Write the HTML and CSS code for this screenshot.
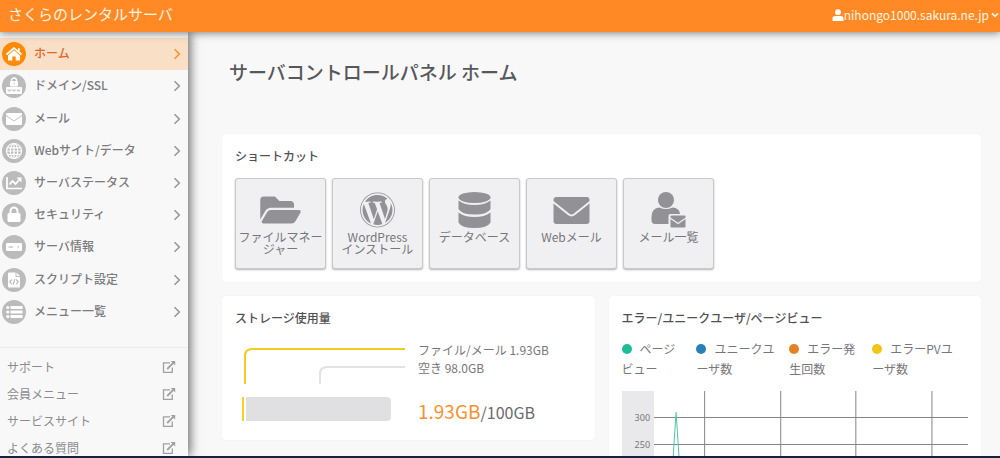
FILE: index.html
```html
<!DOCTYPE html>
<html lang="ja">
<head>
<meta charset="utf-8">
<meta name="viewport" content="width=device-width, initial-scale=1">
<title>サーバコントロールパネル ホーム</title>
<link rel="stylesheet" href="styles.css">
</head>
<body>
<svg class="defs" aria-hidden="true">
  <symbol id="chevron" viewBox="0 0 8 12"><path d="M1.5 1.2 6.3 6 1.5 10.8" fill="none" stroke="currentColor" stroke-width="1.6"/></symbol>
  <symbol id="external" viewBox="0 0 14 14"><path d="M8 2.8H1.5v9.5h8.8V7.5" fill="none" stroke="currentColor" stroke-width="1.3"/><path d="M5.2 9 11.5 2.6" stroke="currentColor" stroke-width="1.8"/><path d="M8.6 1H13.2V5.6Z" fill="currentColor"/></symbol>
</svg>
<div class="app">
  <header class="topbar">
    <a class="brand" href="#">さくらのレンタルサーバ</a>
    <button class="account" type="button">
      <svg class="account-icon" viewBox="0 0 12 12" aria-hidden="true"><circle cx="6" cy="3.2" r="2.9" fill="currentColor"/><path d="M.5 12V9.800Q.5 7 3.300 7H8.700Q11.500 7 11.500 9.800V12Z" fill="currentColor"/></svg>
      <span>nihongo1000.sakura.ne.jp</span>
      <svg class="account-caret" viewBox="0 0 8 6" aria-hidden="true"><path d="M1 1.300 4 4.300 7 1.300" fill="none" stroke="currentColor" stroke-width="1.700"/></svg>
    </button>
  </header>
  <div class="body">
    <aside class="sidebar">
      <nav class="menu" aria-label="メインメニュー">
        <a class="menu-item active" href="#"><svg class="badge" viewBox="0 0 24 24"><circle cx="12" cy="12" r="12"/><g fill="#fff"><path d="M12 8.300 18 13.500V18.500H13.700V14.500H10.300V18.500H6V13.500Z"/><path d="M4.500 12.500 12 6 19.500 12.500M16.800 6.200V9.500" fill="none" stroke="#fff" stroke-width="1.700"/></g></svg><span>ホーム</span><svg class="arrow"><use href="#chevron"/></svg></a>
        <a class="menu-item" href="#"><svg class="badge" viewBox="0 0 24 24"><circle cx="12" cy="12" r="12"/><path d="M9.500 8V6.500a2.500 2.500 0 0 1 5 0V8" fill="none" stroke="#fff" stroke-width="1.300"/><rect x="8" y="7" width="8" height="5.500" rx=".8" fill="#fff"/><rect x="4" y="13" width="16" height="7" rx="1" fill="#fff"/><path d="M12 8.500v2M6 15.300l.7 2 .8-1.600.8 1.600.7-2M10.500 15.300l.7 2 .8-1.600.8 1.600.7-2M15 15.300l.7 2 .8-1.600.8 1.600.7-2" fill="none" stroke="#bbb" stroke-width=".8"/></svg><span>ドメイン/SSL</span><svg class="arrow"><use href="#chevron"/></svg></a>
        <a class="menu-item" href="#"><svg class="badge" viewBox="0 0 24 24"><circle cx="12" cy="12" r="12"/><rect x="4" y="6" width="16" height="12" rx="1" fill="#fff"/><path d="M4 8.500 12 14l8-5.500" fill="none" stroke="#bbb" stroke-width=".9"/></svg><span>メール</span><svg class="arrow"><use href="#chevron"/></svg></a>
        <a class="menu-item" href="#"><svg class="badge" viewBox="0 0 24 24"><circle cx="12" cy="12" r="12"/><g fill="none" stroke="#fff" stroke-width="1.200"><circle cx="12" cy="12" r="7.500"/><ellipse cx="12" cy="12" rx="3.700" ry="7.500"/><path d="M12 4.500v15M5.300 8.800h13.400M4.500 12h15M5.300 15.300h13.400"/></g></svg><span>Webサイト/データ</span><svg class="arrow"><use href="#chevron"/></svg></a>
        <a class="menu-item" href="#"><svg class="badge" viewBox="0 0 24 24"><circle cx="12" cy="12" r="12"/><path d="M5 6v11.500h15" fill="none" stroke="#fff" stroke-width="1.700"/><path d="m7.500 13.500 3-3.500 3 3 4-4.500" fill="none" stroke="#fff" stroke-width="1.800"/><path d="M14.500 6.500H19.500V11.500Z" fill="#fff"/></svg><span>サーバステータス</span><svg class="arrow"><use href="#chevron"/></svg></a>
        <a class="menu-item" href="#"><svg class="badge" viewBox="0 0 24 24"><circle cx="12" cy="12" r="12"/><path d="M8.500 11V8a3.500 3.500 0 0 1 7 0v3" fill="none" stroke="#fff" stroke-width="2"/><rect x="5.500" y="10" width="13" height="9" rx="1.500" fill="#fff"/></svg><span>セキュリティ</span><svg class="arrow"><use href="#chevron"/></svg></a>
        <a class="menu-item" href="#"><svg class="badge" viewBox="0 0 24 24"><circle cx="12" cy="12" r="12"/><rect x="4" y="8" width="16" height="8" rx="1" fill="#fff"/><path d="M6.500 12h4.500M15.500 12h1.500" stroke="#ccc" stroke-width="1.500"/></svg><span>サーバ情報</span><svg class="arrow"><use href="#chevron"/></svg></a>
        <a class="menu-item" href="#"><svg class="badge" viewBox="0 0 24 24"><circle cx="12" cy="12" r="12"/><path d="M7 4.500h6.500v4.500H18v9.500a1 1 0 0 1-1 1H7a1 1 0 0 1-1-1v-13a1 1 0 0 1 1-1ZM14.500 4.500 18 8h-3.500Z" fill="#fff"/><path d="M9.800 11.500 7.800 13.800 9.800 16.100M14.200 11.500l2 2.300-2 2.300M12.800 11l-1.600 5.700" fill="none" stroke="#bbb" stroke-width="1.200"/></svg><span>スクリプト設定</span><svg class="arrow"><use href="#chevron"/></svg></a>
        <a class="menu-item" href="#"><svg class="badge" viewBox="0 0 24 24"><circle cx="12" cy="12" r="12"/><g fill="#fff"><circle cx="5.800" cy="7.500" r="1.600"/><circle cx="5.800" cy="12" r="1.600"/><circle cx="5.800" cy="16.500" r="1.600"/><path d="M8.500 6h12v3h-12zM8.500 10.500h12v3h-12zM8.500 15h12v3h-12z"/></g></svg><span>メニュー一覧</span><svg class="arrow"><use href="#chevron"/></svg></a>
      </nav>
      <nav class="links" aria-label="関連リンク">
        <a href="#"><span>サポート</span><svg class="ext"><use href="#external"/></svg></a>
        <a href="#"><span>会員メニュー</span><svg class="ext"><use href="#external"/></svg></a>
        <a href="#"><span>サービスサイト</span><svg class="ext"><use href="#external"/></svg></a>
        <a href="#"><span>よくある質問</span><svg class="ext"><use href="#external"/></svg></a>
      </nav>
    </aside>
    <main class="content">
      <h1>サーバコントロールパネル ホーム</h1>
      <section class="card">
        <h2>ショートカット</h2>
        <div class="tiles">
          <a class="tile" href="#"><svg class="tile-icon" viewBox="0 0 576 512"><path d="M573 292 500 416a64 64 0 0 1-55 32H45c-18 0-30-20-21-36L97 288a64 64 0 0 1 55-32h400c18 0 30 20 21 36zM152 224h328v-48c0-27-21-48-48-48H272l-64-64H48C21 64 0 85 0 112v278l69-118c17-30 49-48 83-48z"/></svg><span>ファイルマネージャー</span></a>
          <a class="tile" href="#"><svg class="tile-icon" viewBox="0 0 512 512"><path d="M61.7 169.4l101.5 278C92.2 413 43.3 340.2 43.3 256c0-30.9 6.6-60.1 18.4-86.6zm337.9 75.9c0-26.3-9.4-44.5-17.5-58.7-10.8-17.5-20.9-32.4-20.9-49.9 0-19.6 14.8-37.8 35.7-37.8.9 0 1.8.1 2.8.2-37.9-34.7-88.3-55.9-143.7-55.9-74.3 0-139.7 38.1-177.8 95.9 5 .2 9.7.3 13.7.3 22.2 0 56.7-2.7 56.7-2.7 11.5-.7 12.8 16.2 1.4 17.5 0 0-11.5 1.3-24.3 2l77.5 230.4L249.8 247l-33.1-90.8c-11.5-.7-22.3-2-22.3-2-11.5-.7-10.1-18.2 1.3-17.5 0 0 35.1 2.7 56 2.7 22.2 0 56.7-2.7 56.7-2.7 11.5-.7 12.8 16.2 1.4 17.5 0 0-11.5 1.3-24.3 2l76.900 228.700 21.200-70.900c9-29.400 16-50.500 16-68.700zm-139.900 29.300l-63.800 185.500c19.100 5.600 39.200 8.700 60.100 8.700 24.800 0 48.500-4.300 70.600-12.100-.6-.9-1.100-1.900-1.500-2.900l-65.400-179.200zm183-120.700c.9 6.800 1.400 14 1.400 21.900 0 21.600-4 45.800-16.200 76.200l-65 187.900C426.200 403 468.700 334.500 468.700 256c0-37-9.400-71.800-26-102.100zM504 256c0 136.800-111.300 248-248 248C119.200 504 8 392.700 8 256 8 119.200 119.200 8 256 8c136.700 0 248 111.200 248 248zm-11.400 0c0-130.500-106.200-236.600-236.600-236.600C125.500 19.400 19.400 125.500 19.400 256S125.600 492.600 256 492.600c130.500 0 236.600-106.100 236.600-236.600z"/></svg><span>WordPress<br>インストール</span></a>
          <a class="tile" href="#"><svg class="tile-icon" viewBox="0 0 36 36"><ellipse cx="18" cy="5.500" rx="16" ry="5.500"/><path d="M2 8.500Q8 13 18 13T34 8.500V17Q31 22.500 18 22.500T2 17ZM2 20.500Q8 25 18 25T34 20.500V30.500Q31 36 18 36T2 30.500Z"/></svg><span>データベース</span></a>
          <a class="tile" href="#"><svg class="tile-icon" viewBox="0 0 36 36"><rect y="5" width="36" height="27" rx="3"/><path d="M-1 9.500 15 22.300Q18 24.500 21 22.300L37 9.500" fill="none" stroke="#f0f0f3" stroke-width="2"/></svg><span>Webメール</span></a>
          <a class="tile" href="#"><svg class="tile-icon" viewBox="0 0 36 36"><circle cx="15.500" cy="8" r="8"/><path d="M1 28V25Q1 16 9 15.500q6.500 3 13 0Q29 16 29.500 22H20Q18 22 18 24V32H4.500Q1 32 1 28Z"/><rect x="20" y="23.500" width="15" height="12" rx="1"/><path d="m19.500 26 8 5.500 8-5.500" fill="none" stroke="#f0f0f3" stroke-width="1.200"/></svg><span>メール一覧</span></a>
        </div>
      </section>
      <div class="columns">
        <section class="card">
          <h2>ストレージ使用量</h2>
          <div class="storage">
            <svg class="storage-chart" viewBox="0 0 163 74" role="img" aria-label="ストレージ使用量のグラフ"><path d="M3 37V9Q3 2 10 2H163" fill="none" stroke="#f5ca23" stroke-width="2"/><path d="M78 37V27Q78 20 85 20H163" fill="none" stroke="#e3e3e5" stroke-width="2"/><path d="M0 50H2V74H0Z" fill="#f7d028"/><path d="M4 50H145Q149 50 149 54V70Q149 74 145 74H4Z" fill="#e0e0e3"/></svg>
            <div class="storage-text">
              <p>ファイル/メール 1.93GB<br>空き 98.0GB</p>
              <p class="total"><strong>1.93GB</strong>/100GB</p>
            </div>
          </div>
        </section>
        <section class="card">
          <h2>エラー/ユニークユーザ/ページビュー</h2>
          <ul class="legend">
            <li><i class="dot green"></i>ページビュー</li>
            <li><i class="dot blue"></i>ユニークユーザ数</li>
            <li><i class="dot orange"></i>エラー発生回数</li>
            <li><i class="dot yellow"></i>エラーPVユーザ数</li>
          </ul>
          <svg class="chart" viewBox="0 0 346 192" role="img" aria-label="アクセス推移"><path d="M0 0H32V192H0Z" fill="#e9e9eb"/><path d="M32 26.500H346M32 53.500H346M32 80.500H346M32 107.500H346M32 134.500H346M32 161.500H346M82.500 0V188M158.500 0V188M233.500 0V188M309.500 0V188" stroke="#858585"/><path d="M32 188H43L54 21 65 188H346" fill="none" stroke="#4cc7a6"/><g class="ticks"><text x="28" y="30">300</text><text x="28" y="57">250</text></g></svg>
        </section>
      </div>
    </main>
  </div>
</div>
</body>
</html>
```
FILE: styles.css
```css
* { box-sizing: border-box; }

body {
  margin: 0;
  background: #f8f8f8;
  color: #77777a;
  font: 12px/18px "Noto Sans CJK JP", "Noto Sans", sans-serif;
}

a { color: inherit; text-decoration: none; }
h1, h2, p, ul { margin: 0; padding: 0; }
.defs { display: none; }

.app {
  display: flex;
  flex-direction: column;
  height: 100vh;
  overflow: hidden;
  border-bottom: 2px solid #17243d;
}

.topbar {
  position: relative;
  z-index: 2;
  display: flex;
  flex: none;
  align-items: center;
  justify-content: space-between;
  height: 32px;
  padding: 0 1px 4px 8px;
  background: #ff8a25;
  box-shadow: 0 1px 8px rgba(0, 0, 0, 0.5);
  color: #fff3e4;
}

.brand { font-size: 15px; }

.account {
  display: flex;
  align-items: center;
  padding: 2px 0 0;
  border: 0;
  background: none;
  color: inherit;
  font: inherit;
  font-size: 12px;
}

.account-icon { width: 12px; height: 12px; color: #fff; }
.account-caret { width: 8px; height: 6px; margin-left: 2px; }

.body { display: flex; flex: 1; min-height: 0; }

.sidebar {
  position: relative;
  z-index: 1;
  flex: none;
  width: 188px;
  padding-top: 6px;
  box-shadow: 2px 0 10px rgba(0, 0, 0, 0.6);
  background: #f8f8f8;
}

.menu {
  display: grid;
  grid-auto-rows: 1fr;
  min-height: 290px;
  color: #7b7b7d;
  font-weight: 500;
}

.menu-item {
  display: flex;
  align-items: center;
  gap: 8px;
  padding: 0 7px 0 2px;
}

.menu-item span { flex: 1; padding-bottom: 2px; }
.menu-item.active { background: #f9dfc6; color: #e0662a; }
.badge { width: 24px; height: 24px; fill: #bbbbbc; }
.active .badge { fill: #ff8a05; }
.arrow { width: 8px; height: 12px; color: #99999b; }
.active .arrow { color: #ff9326; }

.links {
  margin-top: 19px;
  padding: 5px 12px 0 7px;
  border-top: 1px solid #ececec;
  color: #8b8b8e;
}

.links a {
  display: flex;
  align-items: center;
  justify-content: space-between;
  height: 27px;
}

.ext { width: 14px; height: 14px; color: #a0a0a3; }

.content {
  flex: 1;
  min-width: 0;
  padding: 26px 19px 0 34px;
}

h1 {
  margin-bottom: 48px;
  padding-left: 7px;
  color: #58585b;
  font-size: 19px;
  font-weight: 500;
  line-height: 28px;
}

.card {
  padding: 13px;
  border-radius: 3px;
  background: #fff;
  box-shadow: 0 0 1px rgba(0, 0, 0, 0.12);
}

h2 { color: #505053; font-size: 12px; font-weight: 500; line-height: 18px; }

.tiles { display: flex; flex-wrap: wrap; gap: 6px; margin-top: 13px; }

.tile {
  display: flex;
  flex-direction: column;
  align-items: center;
  gap: 3px;
  width: 91px;
  min-height: 91px;
  padding-top: 13px;
  border: 1px solid #c9c9cb;
  border-radius: 3px;
  background: #f0f0f3;
  box-shadow: 0 1px 2px rgba(0, 0, 0, 0.3);
  line-height: 12px;
  text-align: center;
  line-break: anywhere;
}

.tile-icon { width: 41px; height: 36px; fill: #929296; }

.columns {
  display: grid;
  grid-template-columns: 1fr 1fr;
  align-items: start;
  gap: 14px;
  margin-top: 14px;
}

.storage { display: flex; align-items: center; gap: 13px; padding: 14px 0 1px 7px; }
.storage-chart { flex: none; width: 163px; height: 74px; }
.storage-text { white-space: nowrap; }
.total { margin-top: 20px; font-size: 16px; line-height: 28px; color: #6b6b6e; }
.total strong { color: #f5922f; font-size: 19px; font-weight: 400; }

.legend {
  display: grid;
  grid-template-columns: 62fr 80fr 70fr 96fr;
  gap: 13px;
  margin-top: 12px;
  list-style: none;
  line-height: 20px;
  line-break: anywhere;
}

.legend li:last-child { padding-right: 10px; }
.dot { display: inline-block; width: 10px; height: 10px; margin-right: 8px; border-radius: 50%; }
.green { background: #1dbd98; }
.blue { background: #2a7fb9; }
.orange { background: #e58125; }
.yellow { background: #efc518; }

.chart { display: block; width: 100%; margin-top: 12px; }
.ticks { fill: #77777a; font: 9px "Noto Sans", sans-serif; text-anchor: end; }
```
